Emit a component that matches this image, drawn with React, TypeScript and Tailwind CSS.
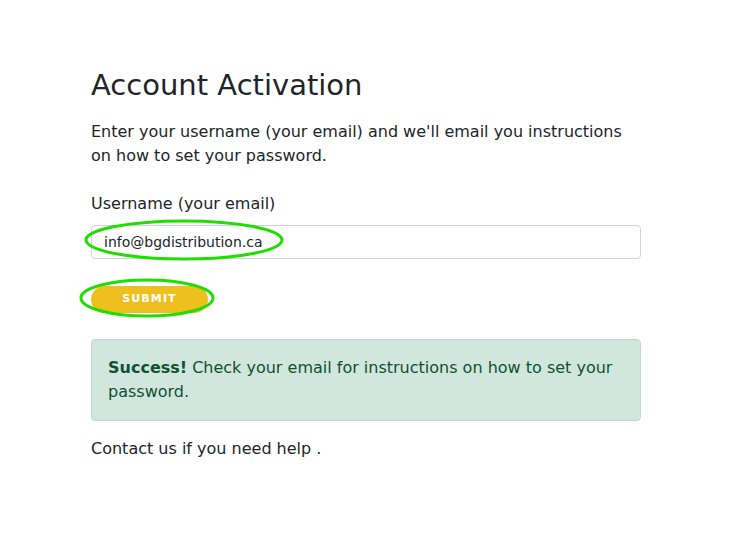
import React from "react";

export default function App() {
  return (
    <div
      className="min-h-[534px] w-full bg-white text-[#212529]"
      style={{ fontFamily: '"DejaVu Sans", "Open Sans", sans-serif' }}
    >
      <div className="relative ml-[91px] w-[550px] pt-[66px]">
        <h1 className="text-[29px] leading-[38px] font-normal">Account Activation</h1>
        <p className="mt-[16px] text-[16px] leading-[24px]">
          Enter your username (your email) and we'll email you instructions on how to set your password.
        </p>

        <label className="mt-[24px] block text-[16px] leading-[24px]">Username (your email)</label>
        <input
          readOnly
          value="info@bgdistribution.ca"
          className="mt-[9px] block h-[34px] w-full rounded-[4px] border border-[#ced4da] px-[12px] text-[14px] text-[#212529] outline-none"
        />

        <button className="mt-[27px] block h-[27px] w-[117px] rounded-full bg-[#edc01f] text-[11px] font-bold tracking-[0.1em] text-white">
          SUBMIT
        </button>

        <div className="mt-[26px] rounded-[4px] border border-[#badbcc] bg-[#d1e7dd] px-[16px] py-[16px] text-[16px] leading-[24px] text-[#0f5132]">
          <strong>Success!</strong> Check your email for instructions on how to set your password.
        </div>

        <p className="mt-[16px] text-[16px] leading-[24px]">Contact us if you need help .</p>

        <svg className="pointer-events-none absolute left-[-9px] top-[218px]" width="206" height="44">
          <ellipse cx="102" cy="22" rx="98" ry="19" fill="none" stroke="#22dd00" strokeWidth="3" />
        </svg>
        <svg className="pointer-events-none absolute left-[-13px] top-[277px]" width="140" height="42">
          <ellipse cx="69" cy="21" rx="66" ry="18" fill="none" stroke="#22dd00" strokeWidth="3" />
        </svg>
      </div>
    </div>
  );
}
